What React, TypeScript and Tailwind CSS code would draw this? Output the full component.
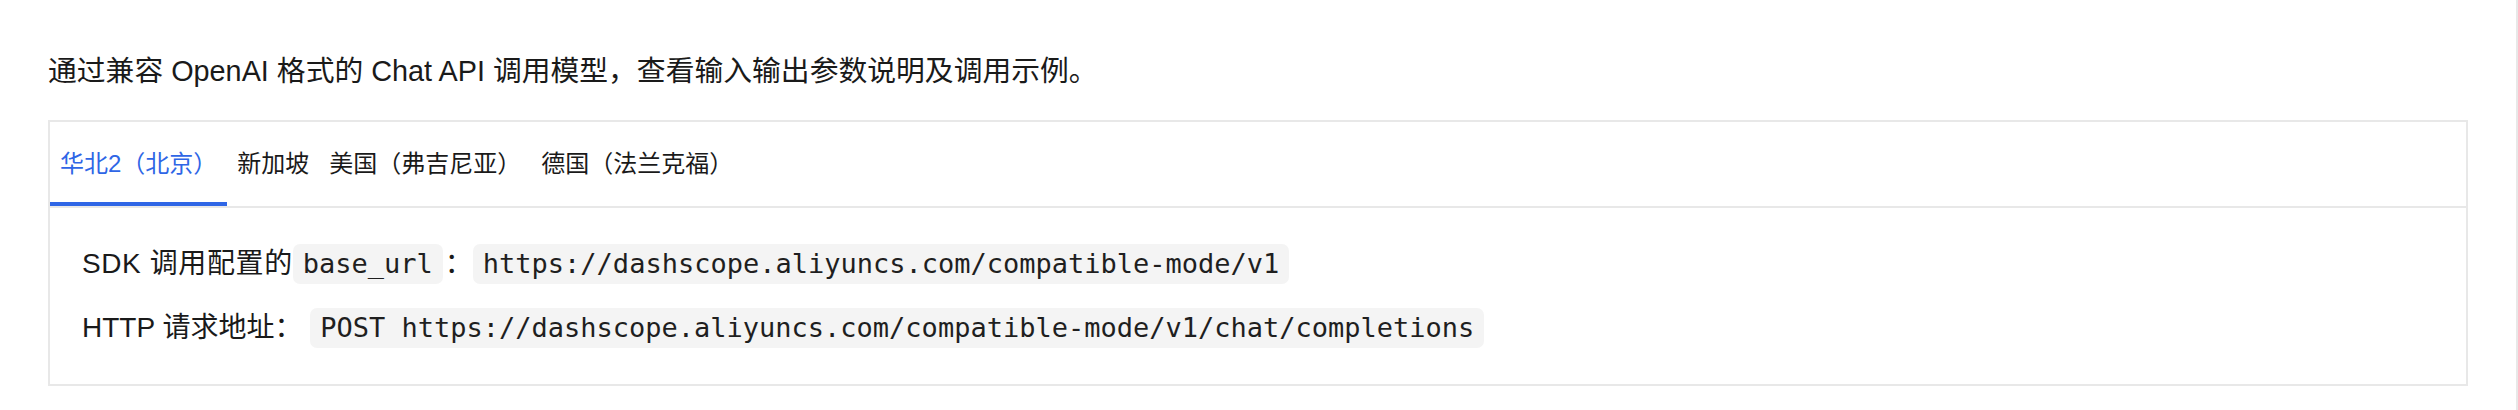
import { useState } from "react";

const REGIONS = ["华北2（北京）", "新加坡", "美国（弗吉尼亚）", "德国（法兰克福）"];

const SANS = "font-['Liberation_Sans','Noto_Sans_CJK_SC',sans-serif]";

function Code({ children }: { children: React.ReactNode }) {
  return (
    <code className="rounded-[7px] bg-[#f4f4f4] px-[10px] py-[4px] font-['DejaVu_Sans_Mono',monospace] text-[27px] leading-[32px] text-[#1f1f1f]">
      {children}
    </code>
  );
}

export default function App() {
  const [active, setActive] = useState(0);

  return (
    <div className={`h-[410px] w-full border-r-2 border-[#e8e8e8] bg-white px-[48px] ${SANS} text-[#1a1a1a]`}>
      <p className="pt-[49px] text-[28.8px] leading-[44px]">
        通过兼容 OpenAI 格式的 Chat API 调用模型，查看输入输出参数说明及调用示例。
      </p>

      <div className="mt-[27px] border-2 border-[#e8e8e8]">
        <div className="flex h-[86px] border-b-2 border-[#e8e8e8]">
          {REGIONS.map((r, i) => (
            <button
              key={r}
              onClick={() => setActive(i)}
              className={`relative flex h-full items-center px-[10px] text-[24px] ${
                i === active ? "text-[#2f66e6]" : "text-[#1a1a1a]"
              }`}
            >
              {r}
              {i === active && (
                <span className="absolute inset-x-0 bottom-0 h-[4px] bg-[#2f66e6]" />
              )}
            </button>
          ))}
        </div>

        <div className="flex flex-col gap-[16px] px-[32px] py-[32px] text-[28px]">
          <div className="flex h-[48px] items-center whitespace-pre">
            <span className="tracking-[0.6px]">SDK 调用配置的</span>
            <Code>base_url</Code>
            <span className="ml-[2px]">：</span>
            <Code>https://dashscope.aliyuncs.com/compatible-mode/v1</Code>
          </div>
          <div className="flex h-[48px] items-center whitespace-pre">
            HTTP 请求地址： <Code>POST https://dashscope.aliyuncs.com/compatible-mode/v1/chat/completions</Code>
          </div>
        </div>
      </div>
    </div>
  );
}
